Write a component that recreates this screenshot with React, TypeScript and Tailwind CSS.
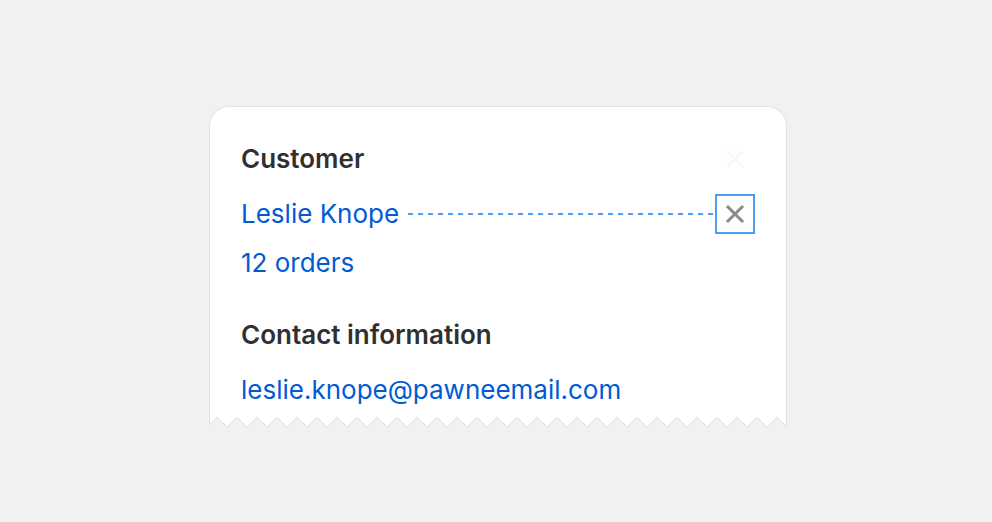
import React from 'react';

function CrossIcon({ color }: { color: string }) {
  return (
    <svg width="22" height="22" viewBox="0 0 22 22" fill="none">
      <path d="M4 4L18 18M18 4L4 18" stroke={color} strokeWidth="3" strokeLinecap="square" />
    </svg>
  );
}

function Zigzag() {
  // teeth along the torn bottom edge of the card
  const teeth = 29;
  const w = 578;
  let d = 'M0.5 0 L0.5 9';
  for (let i = 0; i < teeth; i++) {
    const x = i * 20;
    d += ` L${x + 8} 1 L${x + 18} 11`;
  }
  d += ` L${w - 0.5} 3 L${w - 0.5} 0`;
  return (
    <svg width={w} height="13" viewBox={`0 0 ${w} 13`} className="block">
      <path d={d + ' Z'} fill="#ffffff" />
      <path d={d} fill="none" stroke="#e1e1e1" strokeWidth="1" />
    </svg>
  );
}

export default function App() {
  return (
    <div
      className="min-h-screen bg-[#f1f1f1] flex justify-center pl-1 pt-[106px]"
      style={{ fontFamily: 'Inter, "Noto Sans", sans-serif' }}
    >
      <div className="w-[578px]">
        <div className="bg-white border border-b-0 border-[#e3e3e3] rounded-t-[20px] pl-[31px] pr-[31px] pt-[36px] pb-[10px]">
          <div className="flex items-center justify-between h-8">
            <h2 className="text-[26px] leading-8 font-semibold text-[#303030]">Customer</h2>
            <div className="w-10 flex justify-center">
              <CrossIcon color="#f9f9f9" />
            </div>
          </div>

          <div className="flex items-center mt-[19px] h-10">
            <span className="text-[26px] leading-8 text-[#005bd3]">Leslie Knope</span>
            <div className="flex-1 pl-[9px] pr-[1px]">
              <svg width="100%" height="2" className="block">
                <line x1="0" y1="1" x2="100%" y2="1" stroke="#4a9ef5" strokeWidth="2" strokeDasharray="5 5" />
              </svg>
            </div>
            <div className="w-10 h-10 border-2 border-[#4a9ef5] flex items-center justify-center">
              <CrossIcon color="#8a8a8a" />
            </div>
          </div>

          <div className="mt-[13px] text-[26px] leading-8 text-[#005bd3]">12 orders</div>

          <h2 className="mt-10 text-[26px] leading-8 font-semibold text-[#303030]">Contact information</h2>

          <div className="mt-[23px] text-[26px] leading-8 text-[#005bd3]">leslie.knope@pawneemail.com</div>
        </div>
        <Zigzag />
      </div>
    </div>
  );
}
